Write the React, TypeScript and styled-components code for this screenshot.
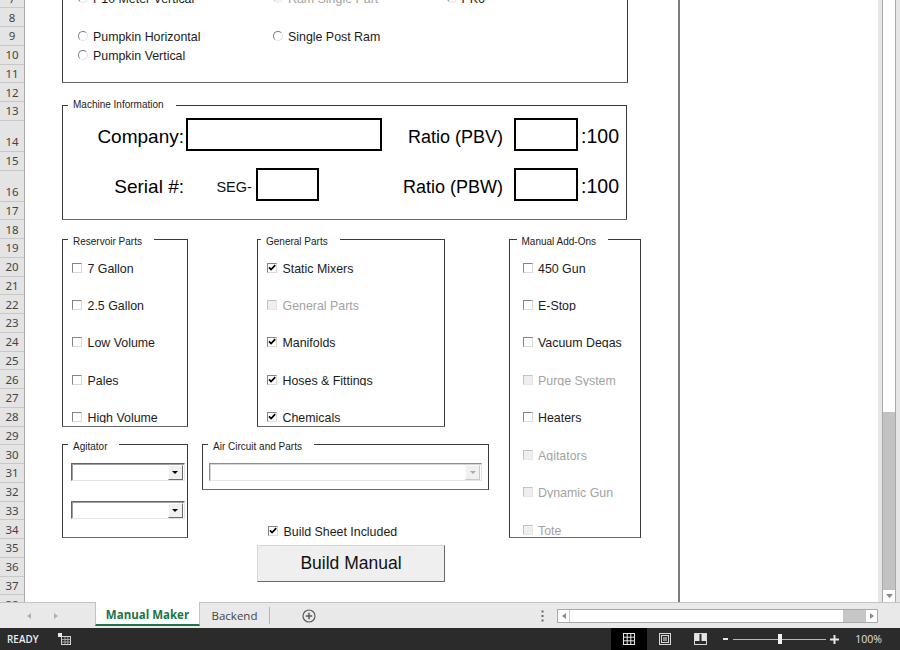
import React from 'react';
import styled, { createGlobalStyle } from 'styled-components';

const GlobalStyle = createGlobalStyle`
  html, body { margin: 0; padding: 0; background: #fff; }
  body { width: 900px; height: 650px; overflow: hidden; font-family: "Liberation Sans", Arial, sans-serif; }
  * { box-sizing: border-box; }
`;

const Window = styled.div`
  width: 900px;
  height: 650px;
  display: flex;
  flex-direction: column;
  overflow: hidden;
  background: #fff;
`;

const Workspace = styled.div`
  display: flex;
  height: 602px;
  flex: none;
`;

const RowHeaders = styled.div`
  width: 25px;
  flex: none;
  background: #e4e4e4;
  border-right: 1px solid #a9a9a9;
  overflow: hidden;
`;

const RowHeaderStack = styled.div`
  margin-top: -10.4px;
  display: flex;
  flex-direction: column;
`;

const RowHead = styled.div<{ $h: number }>`
  height: ${(p) => p.$h}px;
  flex: none;
  border-bottom: 1px solid #c8c8c8;
  display: flex;
  align-items: flex-end;
  justify-content: center;
  padding-bottom: 1.5px;
  font-family: "Noto Sans", "Open Sans", sans-serif;
  font-size: 11.5px;
  line-height: 14px;
  color: #444;
`;

const Canvas = styled.div`
  position: relative;
  flex: 1;
  overflow: hidden;
  background: #fff;
`;

const PageBreak = styled.div`
  position: absolute;
  top: 0;
  bottom: 0;
  left: 653px;
  width: 2px;
  background: #7c7c7c;
`;

const Group = styled.div<{ $x: number; $y: number; $w: number; $h: number }>`
  position: absolute;
  left: ${(p) => p.$x}px;
  top: ${(p) => p.$y}px;
  width: ${(p) => p.$w}px;
  height: ${(p) => p.$h}px;
  border: 1px solid #3a3a3a;
  border-bottom-color: #6a6a6a;
`;

const Legend = styled.span<{ $pl?: number; $top?: number }>`
  position: absolute;
  top: ${(p) => p.$top ?? -4}px;
  left: ${(p) => p.$pl ?? 5}px;
  background: #fff;
  padding: 0 12px 0 5px;
  font-size: 10px;
  line-height: 12px;
  color: #222;
  white-space: nowrap;
`;

const RadioGrid = styled.div`
  display: grid;
  grid-template-columns: 195px 173.4px auto;
  grid-auto-rows: 19px;
  padding: 51px 0 0 15.3px;
`;

const RadioRow = styled.div<{ $disabled?: boolean; $row: number; $col: number }>`
  grid-row: ${(p) => p.$row};
  grid-column: ${(p) => p.$col};
  display: flex;
  align-items: flex-start;
  gap: 4.7px;
  height: 14px;
  font-size: 12.4px;
  line-height: 14px;
  white-space: nowrap;
  color: ${(p) => (p.$disabled ? '#a3a3a3' : '#1c1c1c')};
`;

const RadioDot = styled.span<{ $disabled?: boolean }>`
  width: 10px;
  height: 10px;
  margin-top: 1px;
  flex: none;
  border-radius: 50%;
  border: 1px solid;
  border-color: ${(p) => (p.$disabled ? '#c4c4c4 #ececec #ececec #c4c4c4' : '#7d7d7d #e2e2e2 #e2e2e2 #7d7d7d')};
  background: ${(p) => (p.$disabled ? '#f3f3f3' : '#fff')};
`;

const CheckList = styled.div<{ $pl: number }>`
  display: flex;
  flex-direction: column;
  gap: 25.45px;
  padding: 21.6px 0 0 ${(p) => p.$pl}px;
`;

const CheckRow = styled.div<{ $disabled?: boolean }>`
  display: flex;
  align-items: flex-start;
  gap: 5.5px;
  height: 12px;
  overflow: hidden;
  font-size: 12.4px;
  line-height: 14px;
  white-space: nowrap;
  color: ${(p) => (p.$disabled ? '#a3a3a3' : '#1c1c1c')};
`;

const FloatCheck = styled(CheckRow)`
  position: absolute;
  left: 243px;
  top: 524.6px;
`;

const Box = styled.span<{ $disabled?: boolean }>`
  width: 10px;
  height: 10px;
  margin-top: 1px;
  flex: none;
  display: flex;
  align-items: center;
  justify-content: center;
  border: 1px solid;
  border-color: ${(p) => (p.$disabled ? '#c2c2c2 #e6e6e6 #e6e6e6 #c2c2c2' : '#858585 #dadada #dadada #858585')};
  background: ${(p) => (p.$disabled ? '#efefef' : '#fff')};
`;

const MachineGrid = styled.div`
  display: grid;
  grid-template-columns: 121px 198.4px 120.6px 75.6px auto;
  grid-template-rows: 34px 34px;
  row-gap: 16px;
  padding-top: 11px;
  align-items: center;
`;

const BigLabel = styled.span<{ $size: number; $nudge?: number }>`
  justify-self: end;
  font-size: ${(p) => p.$size}px;
  line-height: 1;
  padding-top: ${(p) => p.$nudge ?? 0}px;
  color: #000;
  white-space: nowrap;
`;

const Suffix = styled.span`
  justify-self: start;
  padding: 6px 0 0 2.5px;
  font-size: 19.5px;
  line-height: 1;
  color: #000;
`;

const TextBox = styled.div<{ $w: number; $ml?: number }>`
  width: ${(p) => p.$w}px;
  height: 33px;
  margin-left: ${(p) => p.$ml ?? 0}px;
  border: 2px solid #000;
  background: #fff;
`;

const SegWrap = styled.div`
  display: flex;
  align-items: center;
  gap: 4px;
  padding-left: 32.4px;
`;

const SegText = styled.span`
  font-size: 14.5px;
  line-height: 1;
  padding-top: 6px;
  color: #111;
`;

const ComboStack = styled.div<{ $pl: number }>`
  display: flex;
  flex-direction: column;
  gap: 20px;
  padding: 18px 0 0 ${(p) => p.$pl}px;
`;

const Combo = styled.div<{ $w: number; $disabled?: boolean }>`
  width: ${(p) => p.$w}px;
  height: 18px;
  display: flex;
  align-items: center;
  justify-content: flex-end;
  padding-right: 1px;
  background: #fff;
  border: 1px solid;
  border-color: ${(p) => (p.$disabled ? '#8e8e8e #e6e6e6 #e6e6e6 #8e8e8e' : '#646464 #e3e3e3 #e3e3e3 #646464')};
  box-shadow: inset 1px 1px 0 ${(p) => (p.$disabled ? '#d4d4d4' : '#a0a0a0')};
`;

const DropBtn = styled.span<{ $disabled?: boolean }>`
  width: 15px;
  height: 15px;
  display: flex;
  align-items: center;
  justify-content: center;
  background: #f0f0f0;
  border: 1px solid;
  border-color: ${(p) => (p.$disabled ? '#fafafa #c8c8c8 #c8c8c8 #fafafa' : '#fff #6c6c6c #6c6c6c #fff')};
`;

const Tri = styled.span<{ $color: string }>`
  width: 0;
  height: 0;
  border-left: 3px solid transparent;
  border-right: 3px solid transparent;
  border-top: 3px solid ${(p) => p.$color};
`;

const BigButton = styled.button`
  position: absolute;
  left: 232px;
  top: 544.5px;
  width: 188px;
  height: 37px;
  padding: 0;
  background: #efefef;
  border: 1px solid;
  border-color: #d6d6d6 #6a6a6a #6a6a6a #d6d6d6;
  font-family: "Liberation Sans", Arial, sans-serif;
  font-size: 17.5px;
  color: #111;
`;

const VScroll = styled.div`
  width: 22px;
  flex: none;
  background: #e6e6e6;
  padding: 0 4px;
  display: flex;
`;

const VTrack = styled.div`
  flex: 1;
  display: flex;
  flex-direction: column;
  background: #fff;
  border-left: 1px solid #a9a9a9;
  border-right: 1px solid #a9a9a9;
`;

const Spacer = styled.div`
  flex: 1;
`;

const EndPad = styled.div`
  width: 18px;
  flex: none;
`;

const VThumb = styled.div`
  height: 178px;
  flex: none;
  background: #c2c2c2;
`;

const VArrow = styled.div`
  height: 12px;
  flex: none;
  display: flex;
  align-items: center;
  justify-content: center;
`;

const TabBar = styled.div`
  height: 26px;
  flex: none;
  display: flex;
  align-items: center;
  background: #e9e9e9;
  border-top: 1px solid #c3c3c3;
  font-family: "Open Sans", "Noto Sans", sans-serif;
`;

const NavArea = styled.div`
  width: 95px;
  align-self: stretch;
  display: flex;
  align-items: center;
  gap: 23px;
  padding-left: 26.5px;
`;

const Tab = styled.div<{ $active?: boolean; $w: number }>`
  width: ${(p) => p.$w}px;
  align-self: flex-start;
  height: ${(p) => (p.$active ? 24 : 24)}px;
  margin-top: ${(p) => (p.$active ? -1 : 0)}px;
  display: flex;
  align-items: center;
  justify-content: center;
  font-size: 11.5px;
  font-weight: ${(p) => (p.$active ? 700 : 400)};
  color: ${(p) => (p.$active ? '#217346' : '#444')};
  background: ${(p) => (p.$active ? '#fff' : 'transparent')};
  border-left: ${(p) => (p.$active ? '1px solid #c3c3c3' : 'none')};
  border-right: ${(p) => (p.$active ? '1px solid #c3c3c3' : 'none')};
  border-bottom: ${(p) => (p.$active ? '2px solid #217346' : 'none')};
  padding-top: ${(p) => (p.$active ? 3 : 0)}px;
`;

const TabSep = styled.div`
  width: 1px;
  height: 17px;
  background: #b5b5b5;
`;

const AddSheet = styled.div`
  margin-left: 32px;
  display: flex;
`;

const Dots = styled.div`
  display: flex;
  margin-right: 13px;
`;

const HScroll = styled.div`
  width: 321px;
  height: 14px;
  display: flex;
  border: 1px solid #a9a9a9;
  background: #fff;
  margin-right: 22px;
`;

const HArrow = styled.div<{ $side: 'l' | 'r' }>`
  width: 12px;
  flex: none;
  display: flex;
  align-items: center;
  justify-content: center;
  border-left: ${(p) => (p.$side === 'r' ? '1px solid #c8c8c8' : 'none')};
  border-right: ${(p) => (p.$side === 'l' ? '1px solid #c8c8c8' : 'none')};
`;

const HThumb = styled.div`
  width: 22px;
  flex: none;
  background: #c6c6c6;
`;

const StatusBar = styled.div`
  height: 22px;
  flex: none;
  display: flex;
  align-items: center;
  background: #2b2b2b;
  color: #ededed;
  font-family: "Open Sans", "Noto Sans", sans-serif;
`;

const Ready = styled.span`
  padding-left: 7px;
  font-size: 9.8px;
  font-weight: 600;
  letter-spacing: 0.1px;
`;

const MacroIcon = styled.span`
  margin-left: 19px;
  display: flex;
`;

const ViewBtn = styled.div<{ $active?: boolean }>`
  width: 35.5px;
  align-self: stretch;
  display: flex;
  align-items: center;
  justify-content: center;
  background: ${(p) => (p.$active ? '#000' : 'transparent')};
`;

const ZoomArea = styled.div`
  display: flex;
  align-items: center;
  padding-left: 5.5px;
`;

const ZoomMinus = styled.span`
  width: 5px;
  height: 2px;
  background: #e6e6e6;
`;

const SliderTrack = styled.div`
  width: 93px;
  height: 1px;
  margin: 0 4px 0 5px;
  background: #b8b8b8;
  display: flex;
  align-items: center;
  justify-content: center;
`;

const SliderThumb = styled.span`
  width: 4px;
  height: 10px;
  background: #f0f0f0;
`;

const ZoomPct = styled.span`
  margin-left: 16px;
  font-size: 10.5px;
  color: #e0e0e0;
`;

const rows = Array.from({ length: 32 }, (_, i) => {
  const n = i + 7;
  return { n, h: n === 14 || n === 16 ? 31 : 18.75 };
});

const CheckMark = () => (
  <svg width="8" height="8" viewBox="0 0 8 8">
    <path d="M1 3.4 L3.1 5.6 L7.2 1.2" fill="none" stroke="#000" strokeWidth="1.7" />
  </svg>
);

const Check = ({ label, checked, disabled }: { label: string; checked?: boolean; disabled?: boolean }) => (
  <CheckRow $disabled={disabled}>
    <Box $disabled={disabled}>{checked && <CheckMark />}</Box>
    <span>{label}</span>
  </CheckRow>
);

const Radio = ({ label, disabled, row, col }: { label: string; disabled?: boolean; row: number; col: number }) => (
  <RadioRow $disabled={disabled} $row={row} $col={col}>
    <RadioDot $disabled={disabled} />
    <span>{label}</span>
  </RadioRow>
);

const Dropdown = ({ w, disabled }: { w: number; disabled?: boolean }) => (
  <Combo $w={w} $disabled={disabled}>
    <DropBtn $disabled={disabled}>
      <Tri $color={disabled ? '#a8a8a8' : '#000'} />
    </DropBtn>
  </Combo>
);

export default function App() {
  return (
    <Window>
      <GlobalStyle />
      <Workspace>
        <RowHeaders>
          <RowHeaderStack>
            {rows.map((r) => (
              <RowHead key={r.n} $h={r.h}>
                {r.n}
              </RowHead>
            ))}
          </RowHeaderStack>
        </RowHeaders>
        <Canvas>
          <PageBreak />

          <Group $x={37} $y={-60} $w={566} $h={143}>
            <RadioGrid>
              <Radio row={1} col={1} label="P10 Meter Vertical" />
              <Radio row={1} col={2} label="Ram Single Part" disabled />
              <Radio row={1} col={3} label="PK6" />
              <Radio row={3} col={1} label="Pumpkin Horizontal" />
              <Radio row={3} col={2} label="Single Post Ram" />
              <Radio row={4} col={1} label="Pumpkin Vertical" />
            </RadioGrid>
          </Group>

          <Group $x={37} $y={105} $w={565} $h={115}>
            <Legend $top={-7}>Machine Information</Legend>
            <MachineGrid>
              <BigLabel $size={19} $nudge={5}>Company:</BigLabel>
              <TextBox $w={196} $ml={2.4} />
              <BigLabel $size={18} $nudge={6}>Ratio (PBV)</BigLabel>
              <TextBox $w={64} $ml={11} />
              <Suffix>:100</Suffix>

              <BigLabel $size={19} $nudge={4}>Serial #:</BigLabel>
              <SegWrap>
                <SegText>SEG-</SegText>
                <TextBox $w={63.3} />
              </SegWrap>
              <BigLabel $size={18} $nudge={6}>Ratio (PBW)</BigLabel>
              <TextBox $w={64} $ml={11} />
              <Suffix>:100</Suffix>
            </MachineGrid>
          </Group>

          <Group $x={37} $y={239} $w={126} $h={188}>
            <Legend>Reservoir Parts</Legend>
            <CheckList $pl={9}>
              <Check label="7 Gallon" />
              <Check label="2.5 Gallon" />
              <Check label="Low Volume" />
              <Check label="Pales" />
              <Check label="High Volume" />
            </CheckList>
          </Group>

          <Group $x={232} $y={239} $w={188} $h={188}>
            <Legend $pl={3}>General Parts</Legend>
            <CheckList $pl={9}>
              <Check label="Static Mixers" checked />
              <Check label="General Parts" disabled />
              <Check label="Manifolds" checked />
              <Check label="Hoses & Fittings" checked />
              <Check label="Chemicals" checked />
            </CheckList>
          </Group>

          <Group $x={483.5} $y={239} $w={132.5} $h={299}>
            <Legend $pl={7}>Manual Add-Ons</Legend>
            <CheckList $pl={13}>
              <Check label="450 Gun" />
              <Check label="E-Stop" />
              <Check label="Vacuum Degas" />
              <Check label="Purge System" disabled />
              <Check label="Heaters" />
              <Check label="Agitators" disabled />
              <Check label="Dynamic Gun" disabled />
              <Check label="Tote" disabled />
            </CheckList>
          </Group>

          <Group $x={37} $y={444} $w={126} $h={93.5}>
            <Legend>Agitator</Legend>
            <ComboStack $pl={7.7}>
              <Dropdown w={114} />
              <Dropdown w={114} />
            </ComboStack>
          </Group>

          <Group $x={177} $y={444} $w={287} $h={45.5}>
            <Legend>Air Circuit and Parts</Legend>
            <ComboStack $pl={6}>
              <Dropdown w={273} disabled />
            </ComboStack>
          </Group>

          <FloatCheck>
            <Box>
              <CheckMark />
            </Box>
            <span>Build Sheet Included</span>
          </FloatCheck>

          <BigButton type="button">Build Manual</BigButton>
        </Canvas>
        <VScroll>
          <VTrack>
            <Spacer />
            <VThumb />
            <VArrow>
              <svg width="7" height="4" viewBox="0 0 7 4">
                <path d="M0 0 H7 L3.5 4 Z" fill="#8a8a8a" />
              </svg>
            </VArrow>
          </VTrack>
        </VScroll>
      </Workspace>

      <TabBar>
        <NavArea>
          <svg width="4" height="6" viewBox="0 0 4 6">
            <path d="M4 0 V6 L0 3 Z" fill="#b0b0b0" />
          </svg>
          <svg width="4" height="6" viewBox="0 0 4 6">
            <path d="M0 0 V6 L4 3 Z" fill="#b0b0b0" />
          </svg>
        </NavArea>
        <Tab $active $w={105}>Manual Maker</Tab>
        <Tab $w={69}>Backend</Tab>
        <TabSep />
        <AddSheet>
          <svg width="14" height="14" viewBox="0 0 14 14">
            <circle cx="7" cy="7" r="6" fill="none" stroke="#5a5a5a" strokeWidth="1.2" />
            <path d="M7 3.8 V10.2 M3.8 7 H10.2" stroke="#5a5a5a" strokeWidth="1.5" />
          </svg>
        </AddSheet>
        <Spacer />
        <Dots>
          <svg width="3" height="12" viewBox="0 0 3 12">
            <rect x="0.5" y="0.5" width="2" height="2" fill="#666" />
            <rect x="0.5" y="5" width="2" height="2" fill="#666" />
            <rect x="0.5" y="9.5" width="2" height="2" fill="#666" />
          </svg>
        </Dots>
        <HScroll>
          <HArrow $side="l">
            <svg width="4" height="6" viewBox="0 0 4 6">
              <path d="M4 0 V6 L0 3 Z" fill="#8a8a8a" />
            </svg>
          </HArrow>
          <Spacer />
          <HThumb />
          <HArrow $side="r">
            <svg width="4" height="6" viewBox="0 0 4 6">
              <path d="M0 0 V6 L4 3 Z" fill="#8a8a8a" />
            </svg>
          </HArrow>
        </HScroll>
      </TabBar>

      <StatusBar>
        <Ready>READY</Ready>
        <MacroIcon>
          <svg width="13" height="12" viewBox="0 0 13 12">
            <rect x="0" y="0" width="4" height="4" fill="#e8e8e8" />
            <rect x="3.5" y="3.5" width="9" height="8" fill="none" stroke="#d8d8d8" strokeWidth="1" />
            <path d="M3.5 6.5 H12.5 M3.5 9 H12.5 M7 3.5 V11.5 M9.8 3.5 V11.5" stroke="#bdbdbd" strokeWidth="0.8" />
          </svg>
        </MacroIcon>
        <Spacer />
        <ViewBtn $active>
          <svg width="12" height="12" viewBox="0 0 12 12">
            <rect x="0.5" y="0.5" width="11" height="11" fill="none" stroke="#e6e6e6" strokeWidth="1" />
            <path d="M4.2 0.5 V11.5 M7.8 0.5 V11.5 M0.5 4.2 H11.5 M0.5 7.8 H11.5" stroke="#e6e6e6" strokeWidth="1" />
          </svg>
        </ViewBtn>
        <ViewBtn>
          <svg width="12" height="12" viewBox="0 0 12 12">
            <rect x="0.5" y="0.5" width="11" height="11" fill="none" stroke="#d8d8d8" strokeWidth="1" />
            <rect x="2.5" y="2.5" width="7" height="7" fill="none" stroke="#d8d8d8" strokeWidth="1" />
            <rect x="4" y="4" width="4" height="4" fill="#8a8a8a" />
          </svg>
        </ViewBtn>
        <ViewBtn>
          <svg width="13" height="12" viewBox="0 0 13 12">
            <rect x="0.5" y="0.5" width="12" height="11" fill="none" stroke="#d8d8d8" strokeWidth="1" />
            <rect x="1" y="1" width="4.5" height="7" fill="#e6e6e6" />
            <rect x="7.5" y="1" width="4.5" height="7" fill="#e6e6e6" />
          </svg>
        </ViewBtn>
        <ZoomArea>
          <ZoomMinus />
          <SliderTrack>
            <SliderThumb />
          </SliderTrack>
          <svg width="9" height="9" viewBox="0 0 9 9">
            <path d="M4.5 0 V9 M0 4.5 H9" stroke="#e6e6e6" strokeWidth="2" />
          </svg>
        </ZoomArea>
        <ZoomPct>100%</ZoomPct>
        <EndPad />
      </StatusBar>
    </Window>
  );
}
